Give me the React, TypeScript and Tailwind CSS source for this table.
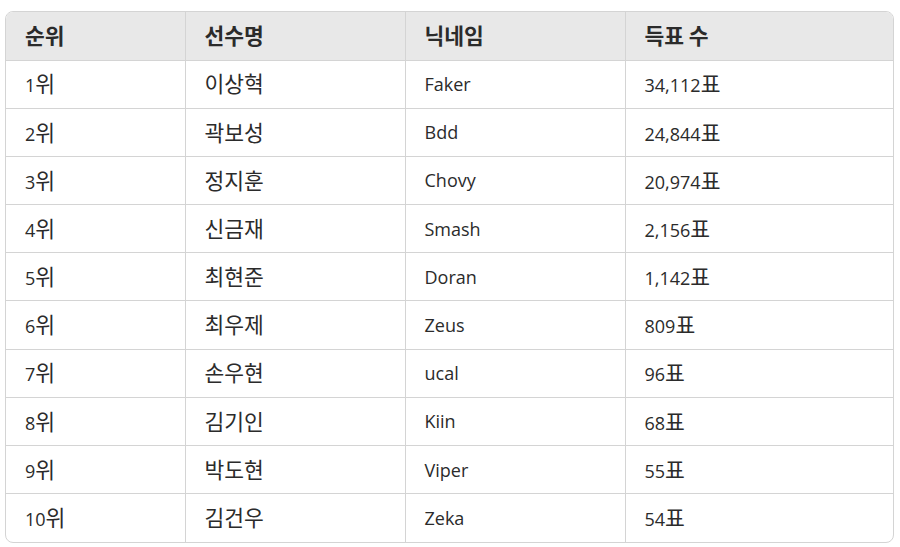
import React from 'react';

const rows: [string, string, string, string][] = [
  ['1위', '이상혁', 'Faker', '34,112표'],
  ['2위', '곽보성', 'Bdd', '24,844표'],
  ['3위', '정지훈', 'Chovy', '20,974표'],
  ['4위', '신금재', 'Smash', '2,156표'],
  ['5위', '최현준', 'Doran', '1,142표'],
  ['6위', '최우제', 'Zeus', '809표'],
  ['7위', '손우현', 'ucal', '96표'],
  ['8위', '김기인', 'Kiin', '68표'],
  ['9위', '박도현', 'Viper', '55표'],
  ['10위', '김건우', 'Zeka', '54표'],
];

const headers = ['순위', '선수명', '닉네임', '득표 수'];

// Hangul glyphs in the reference run a little larger than the Latin ones
function Mixed({ text }: { text: string }): React.ReactElement {
  const parts = text.split(/([가-힣]+)/).filter(Boolean);
  return (
    <>
      {parts.map((p, i) =>
        /[가-힣]/.test(p) ? (
          <span key={i} className="text-[21.5px]">
            {p}
          </span>
        ) : (
          <span key={i}>{p}</span>
        )
      )}
    </>
  );
}

export default function App(): React.ReactElement {
  return (
    <div
      className="w-[900px] h-[547px] bg-white pl-[5px] pt-[11px]"
      style={{ fontFamily: '"Open Sans", "Noto Sans CJK KR", sans-serif' }}
    >
      {/* Rounded table card */}
      <div className="w-[889px] rounded-lg border border-[#d4d4d4] overflow-hidden">
        <table className="w-full border-collapse text-[18px] leading-none text-[#2b2b2b]">
          <colgroup>
            <col className="w-[179px]" />
            <col className="w-[220px]" />
            <col className="w-[220px]" />
            <col />
          </colgroup>
          <thead>
            <tr className="bg-[#e8e8e8] h-[48px]">
              {headers.map((h, i) => (
                <th
                  key={h}
                  className={
                    'text-left font-bold px-[19px] border-b border-[#d4d4d4] ' +
                    (i < 3 ? 'border-r' : '')
                  }
                >
                  <Mixed text={h} />
                </th>
              ))}
            </tr>
          </thead>
          <tbody>
            {rows.map((r, ri) => (
              <tr key={r[0]} className="h-[48.2px]">
                {r.map((c, ci) => (
                  <td
                    key={ci}
                    className={
                      'px-[19px] border-[#d4d4d4] ' +
                      (ci < 3 ? 'border-r ' : '') +
                      (ri < rows.length - 1 ? 'border-b' : '')
                    }
                  >
                    <Mixed text={c} />
                  </td>
                ))}
              </tr>
            ))}
          </tbody>
        </table>
      </div>
    </div>
  );
}
